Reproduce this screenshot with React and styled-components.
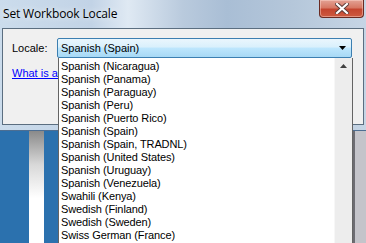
import React from "react";
import styled, { createGlobalStyle } from "styled-components";

const Global = createGlobalStyle`
  html, body { margin: 0; padding: 0; }
  body { width: 366px; height: 243px; overflow: hidden; background: #2b71ae; }
  #root { width: 366px; height: 243px; }
`;

const Page = styled.div`
  position: relative;
  width: 366px;
  height: 243px;
  display: flex;
  flex-direction: column;
  overflow: hidden;
  font-family: "Liberation Sans", Arial, sans-serif;
`;

const Dialog = styled.div`
  height: 131px;
  display: flex;
  flex-direction: column;
  background: linear-gradient(90deg, #cbdcec 0%, #c2d3e6 25%, #dfe9f3 35%, #b9cadd 50%, #a9bed5 62%, #b5c7da 80%, #c6d5e5 100%);
  padding: 0 2px 5px 2px;
  box-sizing: border-box;
  border-bottom: 1px solid #4d6e92;
`;

const TitleBar = styled.div`
  height: 28px;
  display: flex;
  align-items: flex-start;
  justify-content: space-between;
`;

const Title = styled.div`
  font-family: "Open Sans", "Liberation Sans", sans-serif;
  font-size: 12px;
  color: #000;
  padding: 5px 0 0 1px;
  letter-spacing: -0.15px;
  text-shadow: 0 0 6px rgba(255,255,255,0.9);
`;

const CloseButton = styled.div`
  width: 45px;
  height: 18px;
  margin-right: 0;
  box-sizing: border-box;
  border: 1px solid #6a2a22;
  border-top: none;
  border-radius: 0 0 4px 4px;
  background: linear-gradient(180deg, #e3a295 0%, #d77864 45%, #c4452f 55%, #cd5a40 100%);
  box-shadow: inset 0 0 0 1px rgba(255,220,210,0.45);
  display: flex;
  align-items: center;
  justify-content: center;
`;

const Client = styled.div`
  flex: 1;
  background: #f0f0f0;
  border: 1px solid #5b6e80;
  display: flex;
  flex-direction: column;
  padding: 9px 0 0 9px;
  gap: 9px;
`;

const Row = styled.div`
  display: flex;
  align-items: center;
`;

const Label = styled.div`
  width: 45px;
  font-size: 11px;
  color: #000;
`;

const Combo = styled.div`
  width: 295px;
  height: 20px;
  box-sizing: border-box;
  border: 1px solid #3c7fb1;
  border-radius: 2px;
  background: linear-gradient(180deg, #eaf6fd 0%, #d9f0fc 45%, #bee6fd 50%, #a7d9f5 100%);
  display: flex;
  align-items: center;
  justify-content: space-between;
  padding: 0 5px 0 3px;
  font-size: 11px;
  color: #000;
`;

const Link = styled.a`
  font-size: 11px;
  color: #0000ff;
  text-decoration: underline;
  white-space: nowrap;
  overflow: hidden;
  width: 46px;
`;

const Desktop = styled.div`
  flex: 1;
  display: grid;
  grid-template-columns: 29px 15px 1fr;
  background: #2b71ae;
`;

const Band = styled.div`
  grid-column: 2;
  background: linear-gradient(180deg, #8a8a8a 0%, #d8d8d8 30%, #ffffff 60%);
`;

const RightGray = styled.div`
  position: absolute;
  left: 353px;
  top: 131px;
  right: 0;
  bottom: 0;
  background: #c4c4ca;
  border-left: 2px solid #6c6c72;
`;

const List = styled.div`
  position: absolute;
  left: 58px;
  top: 58px;
  width: 295px;
  height: 200px;
  box-sizing: border-box;
  background: #fff;
  border: 1px solid #646464;
  border-top: none;
  display: flex;
`;

const Items = styled.div`
  flex: 1;
  display: flex;
  flex-direction: column;
  padding-top: 2px;
`;

const Item = styled.div`
  height: 13px;
  line-height: 13px;
  font-size: 11px;
  letter-spacing: -0.1px;
  padding-left: 2px;
  color: #000;
  white-space: nowrap;
`;

const ScrollBar = styled.div`
  width: 17px;
  background: #ededed;
  border-left: 1px solid #f7f7f7;
  display: flex;
  justify-content: center;
  padding-top: 6px;
`;

const items = [
  "Spanish (Nicaragua)",
  "Spanish (Panama)",
  "Spanish (Paraguay)",
  "Spanish (Peru)",
  "Spanish (Puerto Rico)",
  "Spanish (Spain)",
  "Spanish (Spain, TRADNL)",
  "Spanish (United States)",
  "Spanish (Uruguay)",
  "Spanish (Venezuela)",
  "Swahili (Kenya)",
  "Swedish (Finland)",
  "Swedish (Sweden)",
  "Swiss German (France)",
];

export default function App() {
  return (
    <>
      <Global />
      <Page>
        <Dialog>
          <TitleBar>
            <Title>Set Workbook Locale</Title>
            <CloseButton>
              <svg width="14" height="11" viewBox="0 0 14 11">
                <path d="M2 1 L12 10 M12 1 L2 10" stroke="#5a3a36" strokeWidth="4" strokeLinecap="square" />
                <path d="M2 1 L12 10 M12 1 L2 10" stroke="#ffffff" strokeWidth="2.2" strokeLinecap="square" />
              </svg>
            </CloseButton>
          </TitleBar>
          <Client>
            <Row>
              <Label>Locale:</Label>
              <Combo>
                <span>Spanish (Spain)</span>
                <svg width="7" height="4" viewBox="0 0 7 4">
                  <path d="M0 0 H7 L3.5 4 Z" fill="#000" />
                </svg>
              </Combo>
            </Row>
            <Row>
              <Link>What is a locale?</Link>
            </Row>
          </Client>
        </Dialog>
        <Desktop>
          <Band />
        </Desktop>
        <RightGray />
        <List>
          <Items>
            {items.map((t) => (
              <Item key={t}>{t}</Item>
            ))}
          </Items>
          <ScrollBar>
            <svg width="7" height="4" viewBox="0 0 7 4">
              <path d="M0 4 H7 L3.5 0 Z" fill="#404040" />
            </svg>
          </ScrollBar>
        </List>
      </Page>
    </>
  );
}
